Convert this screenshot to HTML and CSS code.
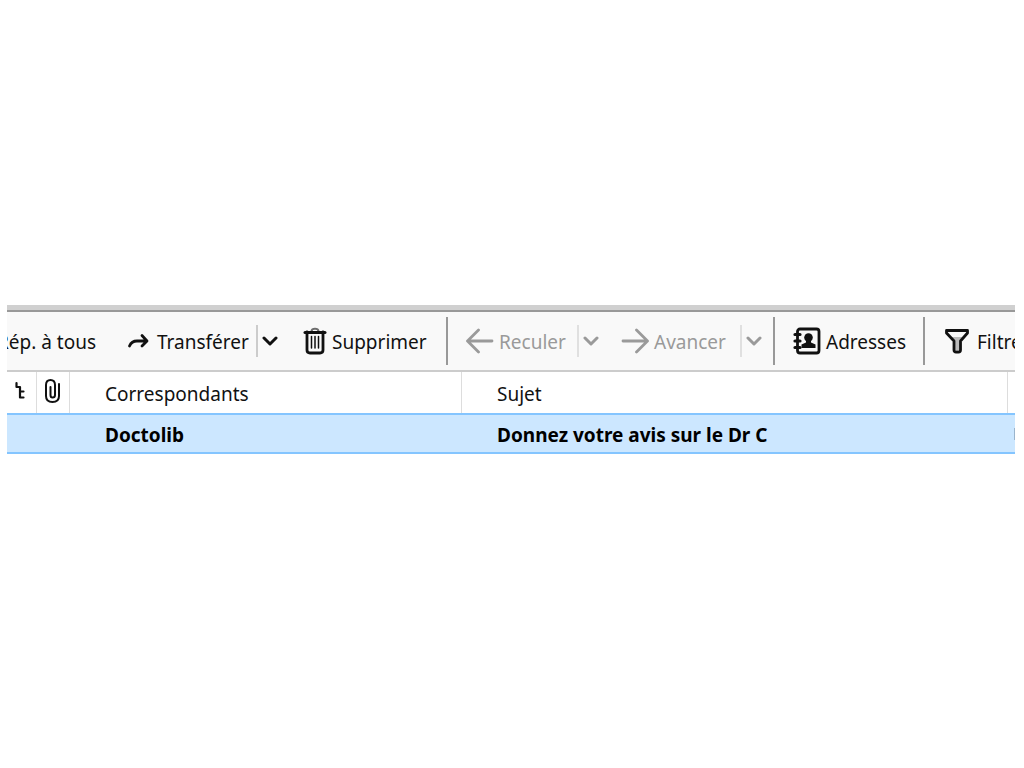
FILE: index.html
```html
<!DOCTYPE html>
<html lang="fr">
<head>
    <meta charset="UTF-8">
    <meta name="viewport" content="width=device-width, initial-scale=1.0">
    <title>Courrier</title>
    <link rel="stylesheet" href="styles.css">
</head>
<body>
    <div class="mail">
        <div class="toolbar" role="toolbar">
            <button class="tool reply-all"><span>Rép. à tous</span></button>
            <button class="tool">
                <svg width="22" height="22" viewBox="0 0 22 22"><path d="M2.500 16C4 12.500 6 11 10 11H19M15 5.500l5 5.500L15 16" stroke-width="2.800"/></svg>
                <span class="wide">Transférer</span>
            </button>
            <button class="more" aria-label="Options de transfert">
                <svg width="16" height="12" viewBox="0 0 16 12"><path d="M2 3l6 6 6-6" stroke-width="3"/></svg>
            </button>
            <button class="tool">
                <svg width="24" height="28" viewBox="0 0 24 28"><path d="M8.500 4C9 1 15 1 15.500 4" stroke-width="2" opacity=".6"/><path d="M2 5.500H22" stroke-width="3"/><path d="M4 5V23Q4 26 7 26H17Q20 26 20 23V5" stroke-width="2.800"/><path d="M8.500 9.500v11.500M12 9.500v11.500M15.500 9.500v11.500" stroke-width="1.500"/></svg>
                <span>Supprimer</span>
            </button>
            <div class="separator"></div>
            <button class="tool" disabled>
                <svg width="28" height="26" viewBox="0 0 28 26"><path d="M12.500 2L1.500 13l11 11M2 13H26" stroke-width="2.800"/></svg>
                <span>Reculer</span>
            </button>
            <button class="more" disabled aria-label="Historique précédent">
                <svg width="16" height="12" viewBox="0 0 16 12"><path d="M2 3l6 6 6-6" stroke-width="3"/></svg>
            </button>
            <button class="tool" disabled>
                <svg width="28" height="26" viewBox="0 0 28 26"><path d="M15.500 2l11 11-11 11M26 13H2" stroke-width="2.800"/></svg>
                <span>Avancer</span>
            </button>
            <button class="more" disabled aria-label="Historique suivant">
                <svg width="16" height="12" viewBox="0 0 16 12"><path d="M2 3l6 6 6-6" stroke-width="3"/></svg>
            </button>
            <div class="separator"></div>
            <button class="tool">
                <svg width="28" height="28" viewBox="0 0 28 28"><rect x="4.500" y="2" width="21.500" height="24" rx="2.500" stroke-width="2.800"/><path d="M2 7.500h5M2 14h5M2 20.500h5" stroke-width="3.200"/><g class="solid"><circle cx="15.500" cy="10.500" r="4.300"/><path d="M13 13h5v2.500l4.500 2V21H8.500v-3.500l4.500-2z"/></g></svg>
                <span>Adresses</span>
            </button>
            <div class="separator"></div>
            <button class="tool">
                <svg width="24" height="26" viewBox="0 0 24 26"><path d="M6 9H18L14.500 13V22H10V13z" fill="#bbb" stroke="none"/><path d="M1.500 2.500H22.500V5L15.500 13V22Q15.500 24 13.500 24H11Q9 24 9 22V13L1.500 5Z" stroke-width="2.800"/></svg>
                <span class="wide">Filtre</span>
            </button>
        </div>
        <table class="messages">
            <colgroup>
                <col class="col-thread">
                <col class="col-attachment">
                <col class="col-people">
                <col>
                <col class="col-status">
            </colgroup>
            <thead>
                <tr>
                    <th aria-label="Fil de discussion"><svg width="14" height="20" viewBox="0 0 14 20"><path d="M1.500 2v4h3.500v10.500h3.500M5 10.500h3.500" stroke-width="2.200"/></svg></th>
                    <th aria-label="Pièce jointe"><svg width="18" height="26" viewBox="0 0 18 26"><path d="M6.500 9V17Q6.500 19.500 8.500 19.500Q11 19.500 11 17V7Q11 2 6.500 2Q2 2 2 7V18Q2 24 8.500 24Q15 24 15 18V6" stroke-width="2"/></svg></th>
                    <th class="text">Correspondants</th>
                    <th class="text">Sujet</th>
                    <th></th>
                </tr>
            </thead>
            <tbody>
                <tr class="selected">
                    <td></td>
                    <td></td>
                    <td class="text">Doctolib</td>
                    <td class="text">Donnez votre avis sur le Dr C</td>
                    <td><div class="status"></div></td>
                </tr>
            </tbody>
        </table>
    </div>
</body>
</html>
```
FILE: styles.css
```css
body {
    margin: 0;
    padding: 305px 9px 0 7px;
    background: #fff;
    color: #111;
    font-family: "Noto Sans", "Open Sans", sans-serif;
    font-size: 19px;
    line-height: 28px;
}

.mail {
    overflow: hidden;
    border-top: 5px solid #d0d0d0;
}

svg {
    display: block;
    flex: none;
    fill: none;
    stroke: currentColor;
    stroke-linecap: round;
    stroke-linejoin: round;
}

.solid {
    fill: currentColor;
    stroke: none;
}

.toolbar {
    display: grid;
    grid-template-columns: 120px 129px 47px 143px 20px 111px 44px 119px 33px 20px 130px 22px 1fr;
    align-items: center;
    height: 58px;
    border-top: 2px solid #999;
    border-bottom: 2px solid #ccc;
    background: #f9f9f9;
}

.tool,
.more {
    display: flex;
    align-items: center;
    min-width: 0;
    padding: 0;
    border: 0;
    background: none;
    color: #111;
    font: inherit;
    white-space: nowrap;
}

.tool {
    gap: 5px;
}

.tool span {
    padding-top: 2px;
}

.reply-all {
    justify-content: flex-end;
    padding-right: 31px;
}

.tool .wide {
    padding-left: 3px;
}

.more {
    height: 32px;
    padding-left: 4px;
    border-left: 2px solid #ccc;
}

.tool:disabled,
.more:disabled {
    color: #9a9a9a;
}

.more:disabled {
    border-color: #e0e0e0;
}

.separator {
    height: 48px;
    border-left: 2px solid #999;
}

.messages {
    width: 100%;
    table-layout: fixed;
    border-collapse: separate;
    border-spacing: 0;
}

.col-thread {
    width: 30px;
}

.col-attachment {
    width: 33px;
}

.col-people {
    width: 392px;
}

.col-status {
    width: 7px;
}

th,
td {
    height: 41px;
    padding: 0;
    box-sizing: border-box;
    text-align: left;
}

th {
    border-right: 1px solid #ddd;
    font-weight: normal;
}

th:last-child {
    border-right: 0;
}

th svg {
    margin: -4px auto 0;
}

.text {
    padding-top: 2px;
    padding-left: 35px;
    white-space: nowrap;
}

.selected td {
    border-top: 2px solid #84c5ff;
    border-bottom: 2px solid #84c5ff;
    background: #cce7ff;
    color: #000;
    font-weight: bold;
}

.status {
    width: 1px;
    height: 12px;
    margin-left: auto;
    background: #9ab4cc;
}
```
